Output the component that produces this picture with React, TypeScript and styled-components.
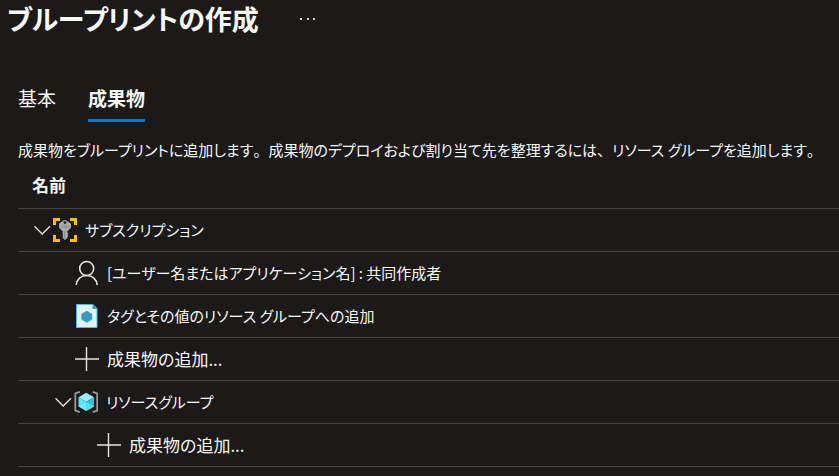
import React, { useState } from "react";
import styled, { createGlobalStyle } from "styled-components";

const GlobalStyle = createGlobalStyle`
  * { box-sizing: border-box; }
  body {
    margin: 0;
    background: #1b1a19;
    color: #f8f8f7;
    font-family: "Noto Sans CJK JP", "Noto Sans", sans-serif;
    font-feature-settings: "palt";
    font-size: 17px;
    line-height: 24px;
  }
  button { font: inherit; font-feature-settings: inherit; color: inherit; background: none; border: 0; padding: 0; cursor: pointer; }
`;

const Page = styled.main`
  display: flex;
  flex-direction: column;
`;

const TitleBar = styled.header`
  display: flex;
  align-items: center;
  gap: 40px;
  height: 38px;
  padding-left: 7px;
`;

const Title = styled.h1`
  margin: 0;
  font-size: 27px;
  line-height: 38px;
  font-weight: 700;
  white-space: nowrap;
`;

const MoreButton = styled.button`
  display: flex;
`;

const Content = styled.section`
  padding: 46px 0 0 18px;
`;

const TabList = styled.div`
  display: flex;
  gap: 32px;
`;

const Tab = styled.button<{ $active: boolean }>`
  && {
    height: 38px;
    padding-bottom: 8px;
    font-size: 19px;
    line-height: 27px;
    font-weight: ${(p) => (p.$active ? 700 : 400)};
    border-bottom: 3px solid ${(p) => (p.$active ? "#0078d4" : "transparent")};
  }
`;

const Description = styled.p`
  margin: 16px 0 0;
  font-size: 15px;
`;

const FullWidthMark = styled.span`
  font-feature-settings: normal;
`;

const Tree = styled.table`
  width: 100%;
  border-collapse: separate;
  border-spacing: 0;
`;

const HeaderCell = styled.th`
  height: 47px;
  padding: 0 0 0 14px;
  border-bottom: 1px solid #484745;
  text-align: left;
  font-weight: 700;
`;

const Cell = styled.td`
  padding: 0;
  border-bottom: 1px solid #484745;
`;

const Item = styled.div<{ $indent: number }>`
  display: flex;
  align-items: center;
  height: 42px;
  padding-left: ${(p) => p.$indent}px;
  font-size: 15px;
  white-space: nowrap;
`;

const Toggle = styled.button<{ $open: boolean }>`
  display: flex;
  flex: none;
  svg { transform: ${(p) => (p.$open ? "none" : "rotate(-90deg)")}; }
`;

const IconSlot = styled.span`
  display: flex;
  flex: none;
  margin-right: 8px;
`;

const AddButton = styled.button`
  && {
    display: flex;
    align-items: center;
    font-size: 17px;
  }
`;

const Chevron = () => (
  <svg width="21" height="24" viewBox="0 0 21 24" fill="none" stroke="#e6e5e4" strokeWidth="1.3" aria-hidden="true">
    <path d="M2.5 8.2 10.2 16 18 8.2" />
  </svg>
);

const SubscriptionIcon = () => (
  <svg width="24" height="24" viewBox="0 0 24 24" aria-hidden="true">
    <path fill="#ffb900" d="M0 0h7v3H3v4H0zM17 0h7v7h-3V3h-4zM0 17h3v4h4v3H0zM21 17h3v7h-7v-3h4z" />
    <path fill="#ababab" d="M12 2c1.200 0 1.700.9 2.800 1.600l2.400 1.500c.6.4.8.8.8 1.400v2.400c0 .6-.2 1-.7 1.500L14.300 13.300v1.200l1.200 1.200-1.200 1.200 1.100 1.200-1.100 1.200v.8L12 22l-2.300-2v-6.700L6.700 10.400C6.200 9.900 6 9.500 6 8.900V6.500c0-.6.200-1 .8-1.400l2.400-1.500C10.300 2.900 10.800 2 12 2z" />
    <circle cx="12" cy="4.600" r="1.400" fill="#24211f" />
    <path fill="#868686" d="M8.500 7.500h7v.8h-7zM8.500 9.300h7v.8h-7zM10.900 12.500h.9v7.500h-.9z" />
  </svg>
);

const PersonIcon = () => (
  <svg width="24" height="26" viewBox="0 0 24 26" fill="none" stroke="#e6e5e4" strokeWidth="1.600" aria-hidden="true">
    <circle cx="11.700" cy="8.500" r="7" />
    <path d="M1.200 25c.5-5.700 4.800-9.500 10.500-9.500S21.700 19.300 22.200 25" />
  </svg>
);

const PolicyIcon = () => (
  <svg width="24" height="24" viewBox="0 0 24 24" aria-hidden="true">
    <path fill="#dff1f8" stroke="#59b4d9" d="M1.500.5h16.500l4 4v19H1.500z" />
    <path fill="#3999c6" d="M17.500.5 22.500 5h-5zM11.800 6.800l5.400 3.100v5.700l-5.400 3.100-5.400-3.100V9.900z" />
  </svg>
);

const PlusIcon = () => (
  <svg width="24" height="24" viewBox="0 0 24 24" stroke="#e6e5e4" strokeWidth="1.400" aria-hidden="true">
    <path d="M11.500 0v24M0 12h24" />
  </svg>
);

const ResourceGroupIcon = () => (
  <svg width="24" height="24" viewBox="0 0 24 24" aria-hidden="true">
    <path fill="none" stroke="#999" strokeWidth="1.800" d="M5.800 1.800 1.300 3.400v17.200l4.500 1.600M18.700 1.800l4.500 1.600v17.200l-4.500 1.600" />
    <path fill="#9cebff" d="M12.200 2.800 20 7.300l-7.800 4.600-7.700-4.600z" />
    <path fill="#50e6ff" d="M4.500 7.300 12.200 11.900v9L4.500 16.400z" />
    <path fill="#32bedd" d="M20 7.300 12.200 11.900v9L20 16.400z" />
    <path fill="#9cebff" d="M4.500 16.400 12.200 11.900v9z" opacity=".5" />
    <path fill="#50e6ff" d="M20 16.400 12.200 11.900v9z" />
  </svg>
);

const MoreIcon = () => (
  <svg width="18" height="4" viewBox="0 0 18 4" fill="#d6d5d4" aria-hidden="true">
    <path d="M1 1h2v2H1zM8 1h2v2H8zM14 1h2v2h-2z" />
  </svg>
);

const tabs = ["基本", "成果物"];

export default function App() {
  const [tab, setTab] = useState("成果物");
  const [subscriptionOpen, setSubscriptionOpen] = useState(true);
  const [groupOpen, setGroupOpen] = useState(true);

  return (
    <Page>
      <GlobalStyle />
      <TitleBar>
        <Title>ブループリントの作成</Title>
        <MoreButton type="button" aria-label="その他"><MoreIcon /></MoreButton>
      </TitleBar>
      <Content>
        <TabList role="tablist">
          {tabs.map((name) => (
            <Tab key={name} type="button" role="tab" aria-selected={tab === name} $active={tab === name} onClick={() => setTab(name)}>
              {name}
            </Tab>
          ))}
        </TabList>
        <Description>
          成果物をブループリントに追加します<FullWidthMark>。</FullWidthMark>成果物のデプロイおよび割り当て先を整理するには<FullWidthMark>、</FullWidthMark>リソース グループを追加します<FullWidthMark>。</FullWidthMark>
        </Description>
        <Tree>
          <thead>
            <tr><HeaderCell scope="col">名前</HeaderCell></tr>
          </thead>
          <tbody>
            <tr>
              <Cell>
                <Item $indent={14}>
                  <Toggle type="button" aria-label="サブスクリプション" aria-expanded={subscriptionOpen} $open={subscriptionOpen} onClick={() => setSubscriptionOpen(!subscriptionOpen)}>
                    <Chevron />
                  </Toggle>
                  <IconSlot><SubscriptionIcon /></IconSlot>
                  サブスクリプション
                </Item>
              </Cell>
            </tr>
            {subscriptionOpen && (
              <>
                <tr>
                  <Cell>
                    <Item $indent={57}>
                      <IconSlot><PersonIcon /></IconSlot>
                      [ユーザー名またはアプリケーション名] : 共同作成者
                    </Item>
                  </Cell>
                </tr>
                <tr>
                  <Cell>
                    <Item $indent={57}>
                      <IconSlot><PolicyIcon /></IconSlot>
                      タグとその値のリソース グループへの追加
                    </Item>
                  </Cell>
                </tr>
                <tr>
                  <Cell>
                    <Item $indent={57}>
                      <AddButton type="button"><IconSlot><PlusIcon /></IconSlot>成果物の追加...</AddButton>
                    </Item>
                  </Cell>
                </tr>
                <tr>
                  <Cell>
                    <Item $indent={35}>
                      <Toggle type="button" aria-label="リソースグループ" aria-expanded={groupOpen} $open={groupOpen} onClick={() => setGroupOpen(!groupOpen)}>
                        <Chevron />
                      </Toggle>
                      <IconSlot><ResourceGroupIcon /></IconSlot>
                      リソースグループ
                    </Item>
                  </Cell>
                </tr>
                {groupOpen && (
                  <tr>
                    <Cell>
                      <Item $indent={79}>
                        <AddButton type="button"><IconSlot><PlusIcon /></IconSlot>成果物の追加...</AddButton>
                      </Item>
                    </Cell>
                  </tr>
                )}
              </>
            )}
          </tbody>
        </Tree>
      </Content>
    </Page>
  );
}
